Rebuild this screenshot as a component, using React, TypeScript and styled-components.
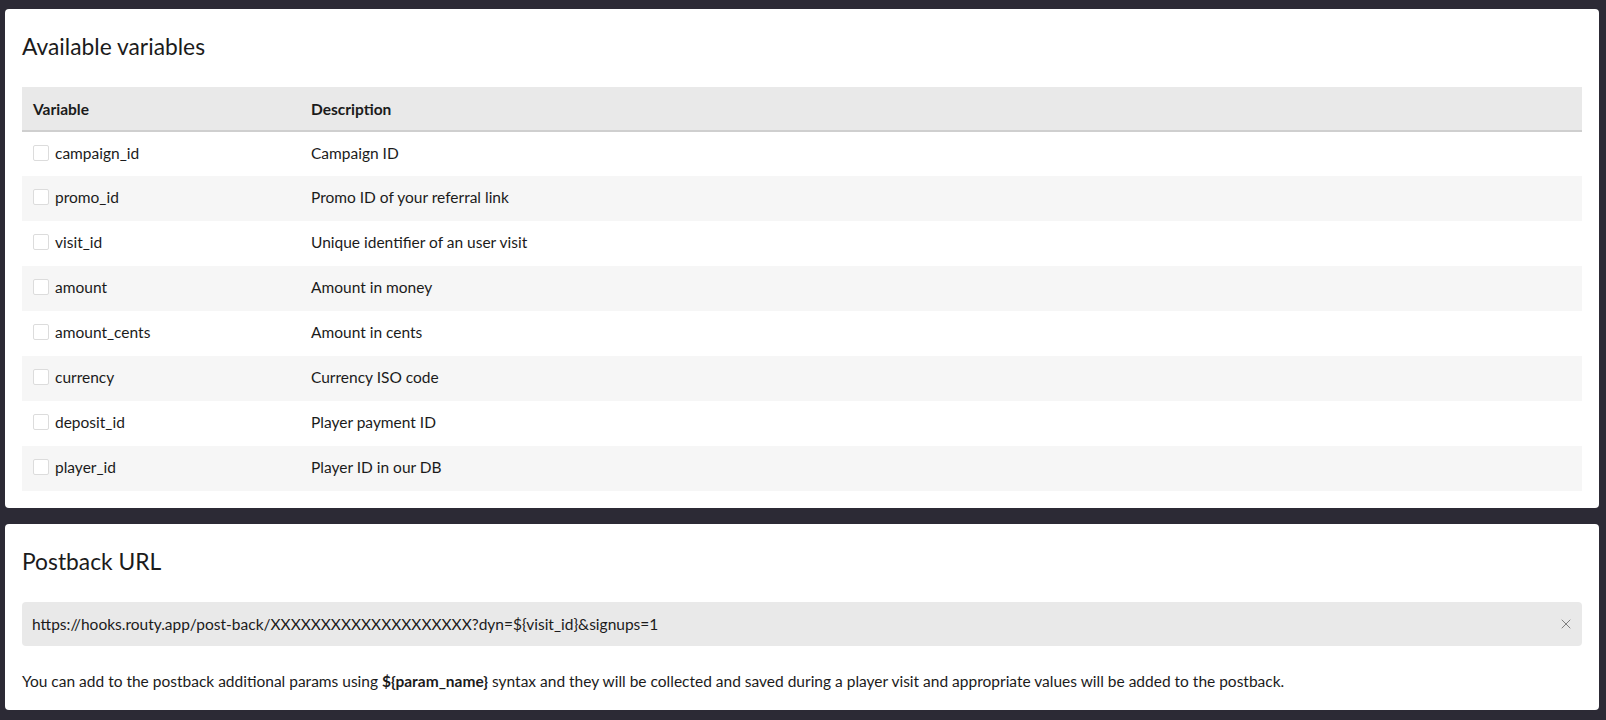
import React from "react";
import styled, { createGlobalStyle } from "styled-components";
import { X } from "lucide-react";

const variables = [
  { name: "campaign_id", description: "Campaign ID" },
  { name: "promo_id", description: "Promo ID of your referral link" },
  { name: "visit_id", description: "Unique identifier of an user visit" },
  { name: "amount", description: "Amount in money" },
  { name: "amount_cents", description: "Amount in cents" },
  { name: "currency", description: "Currency ISO code" },
  { name: "deposit_id", description: "Player payment ID" },
  { name: "player_id", description: "Player ID in our DB" },
];

const postbackUrl =
  "https://hooks.routy.app/post-back/XXXXXXXXXXXXXXXXXXXX?dyn=${visit_id}&signups=1";

const App = () => {
  return (
    <Page>
      <GlobalStyle />
      <Card>
        <Title>Available variables</Title>
        <Table>
          <colgroup>
            <NameCol />
            <col />
          </colgroup>
          <thead>
            <tr>
              <HeadCell>Variable</HeadCell>
              <HeadCell>Description</HeadCell>
            </tr>
          </thead>
          <tbody>
            {variables.map((v, i) => (
              <Row key={v.name} $striped={i % 2 === 1}>
                <Cell>
                  <VarName>
                    <Check />
                    {v.name}
                  </VarName>
                </Cell>
                <Cell>{v.description}</Cell>
              </Row>
            ))}
          </tbody>
        </Table>
      </Card>

      <Card $bottom={19}>
        <Title>Postback URL</Title>
        <UrlField>
          <UrlText>{postbackUrl}</UrlText>
          <ClearButton>
            <X size={16} strokeWidth={1.4} />
          </ClearButton>
        </UrlField>
        <Help>
          You can add to the postback additional params using <b>{"${param_name}"}</b> syntax and they
          will be collected and saved during a player visit and appropriate values will be added to the
          postback.
        </Help>
      </Card>
    </Page>
  );
};

export default App;

const GlobalStyle = createGlobalStyle`
  html, body {
    margin: 0;
    padding: 0;
    background-color: #2c2a35;
  }
  body {
    font-family: Lato, "Open Sans", sans-serif;
    color: #1b1b1b;
  }
`;

const Page = styled.div`
  display: flex;
  flex-direction: column;
  gap: 16px;
  padding: 9px 7px 9px 5px;
  min-height: 720px;
  box-sizing: border-box;
`;

const Card = styled.div<{ $bottom?: number }>`
  background-color: #ffffff;
  border-radius: 4px;
  padding: 22px 17px ${(p) => p.$bottom ?? 17}px 17px;
`;

const Title = styled.h2`
  margin: 0 0 26px 0;
  font-size: 22.8px;
  font-weight: 400;
  line-height: 30px;
`;

const Table = styled.table`
  width: 100%;
  table-layout: fixed;
  border-collapse: collapse;
  font-size: 15.5px;
`;

const NameCol = styled.col`
  width: 278px;
`;

const HeadCell = styled.th`
  text-align: left;
  font-weight: 700;
  background-color: #e9e9e9;
  height: 43px;
  padding: 0 11px;
  border-bottom: 2px solid #cfcfcf;
`;

const Row = styled.tr<{ $striped: boolean }>`
  background-color: ${(p) => (p.$striped ? "#f6f6f6" : "#ffffff")};
`;

const Cell = styled.td`
  height: 45px;
  box-sizing: border-box;
  padding: 0 11px 3px 11px;
`;

const VarName = styled.span`
  display: flex;
  align-items: center;
  gap: 6px;
`;

const Check = styled.span`
  display: inline-block;
  width: 14px;
  height: 14px;
  border: 1px solid #dcdcdc;
  border-radius: 2px;
  background-color: #ffffff;
`;

const UrlField = styled.div`
  display: flex;
  align-items: center;
  height: 44px;
  background-color: #e9e9e9;
  border-radius: 4px;
  padding: 0 8px 0 10px;
  font-size: 15.5px;
`;

const UrlText = styled.span`
  flex: 1;
`;

const ClearButton = styled.span`
  display: flex;
  align-items: center;
  color: #777777;
`;

const Help = styled.p`
  margin: 25px 0 0 0;
  font-size: 15.5px;
  line-height: 20px;
`;
